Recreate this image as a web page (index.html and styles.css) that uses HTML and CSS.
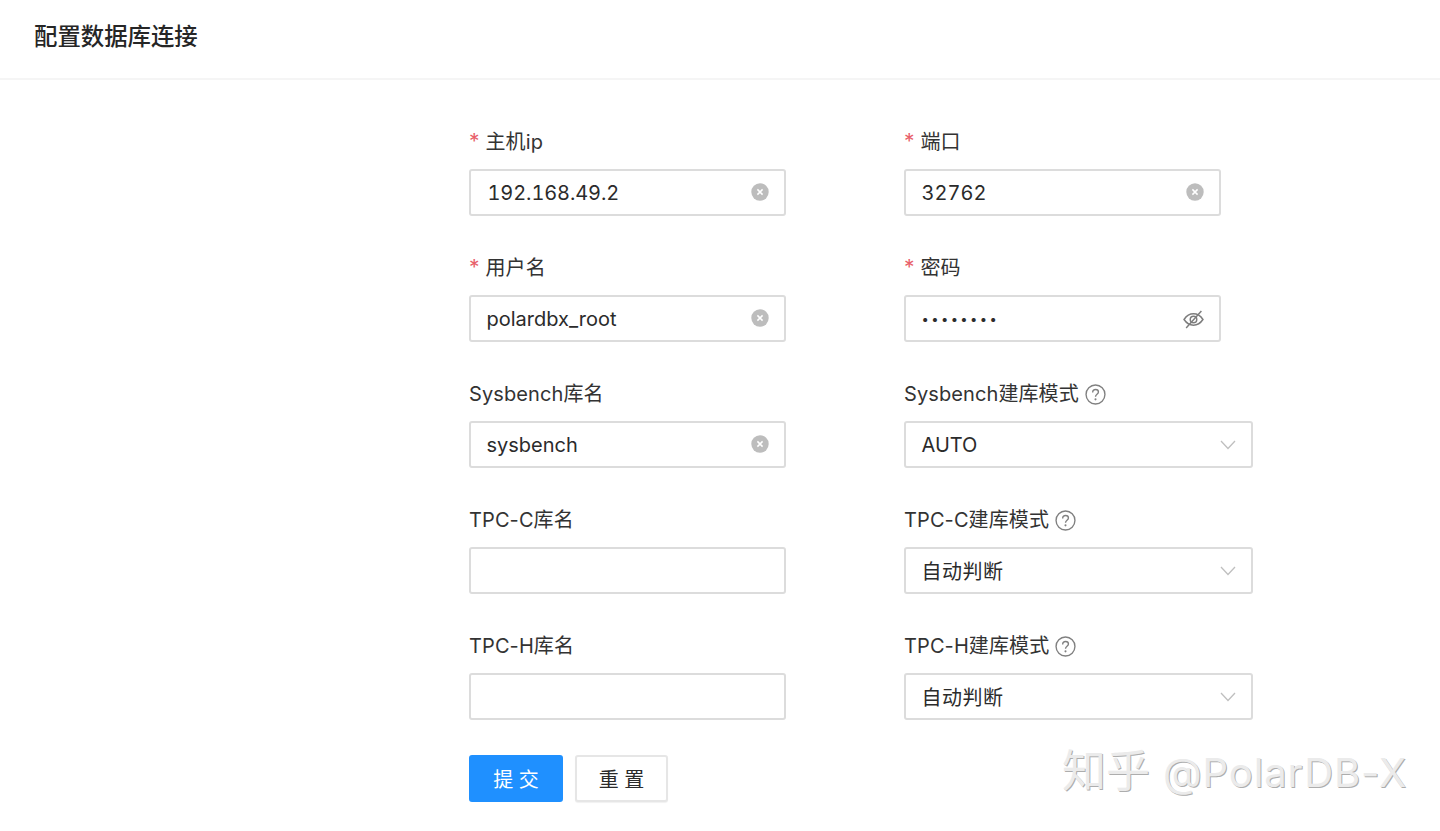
FILE: index.html
```html
<!DOCTYPE html>
<html lang="zh-CN">
<head>
<meta charset="utf-8">
<title>配置数据库连接</title>
<link rel="stylesheet" href="styles.css">
</head>
<body>
<header class="page-header"><h1>配置数据库连接</h1></header>
<main class="content">
  <form class="form-grid">
    <div class="item">
      <label class="label"><span class="req">*</span>主机ip</label>
      <div class="control narrow"><input class="input num" value="192.168.49.2">
        <svg class="clear" viewBox="0 0 18 18"><circle cx="9" cy="9" r="8.7" fill="#bdbdbd"/><path d="M6.4 6.4l5.2 5.2M11.6 6.4l-5.2 5.2" stroke="#fff" stroke-width="1.5" fill="none"/></svg>
      </div>
    </div>
    <div class="item">
      <label class="label"><span class="req">*</span>端口</label>
      <div class="control narrow"><input class="input port" value="32762">
        <svg class="clear" viewBox="0 0 18 18"><circle cx="9" cy="9" r="8.7" fill="#bdbdbd"/><path d="M6.4 6.4l5.2 5.2M11.6 6.4l-5.2 5.2" stroke="#fff" stroke-width="1.5" fill="none"/></svg>
      </div>
    </div>
    <div class="item">
      <label class="label"><span class="req">*</span>用户名</label>
      <div class="control narrow"><input class="input" value="polardbx_root">
        <svg class="clear" viewBox="0 0 18 18"><circle cx="9" cy="9" r="8.7" fill="#bdbdbd"/><path d="M6.4 6.4l5.2 5.2M11.6 6.4l-5.2 5.2" stroke="#fff" stroke-width="1.5" fill="none"/></svg>
      </div>
    </div>
    <div class="item">
      <label class="label"><span class="req">*</span>密码</label>
      <div class="control narrow"><input class="input dots" type="password" value="polardbx">
        <svg class="eye" viewBox="0 0 20 20" fill="none" stroke="#7d7d7d" stroke-width="1.4"><path d="M1 10c2.4-3.6 5.400-5.400 9-5.400s6.600 1.800 9 5.400c-2.400 3.600-5.400 5.400-9 5.400S3.400 13.600 1 10z"/><circle cx="10" cy="10" r="3.100"/><path d="M3 18L17.500 2"/></svg>
      </div>
    </div>
    <div class="item">
      <label class="label">Sysbench库名</label>
      <div class="control narrow"><input class="input" value="sysbench">
        <svg class="clear" viewBox="0 0 18 18"><circle cx="9" cy="9" r="8.7" fill="#bdbdbd"/><path d="M6.4 6.4l5.2 5.2M11.6 6.4l-5.2 5.2" stroke="#fff" stroke-width="1.5" fill="none"/></svg>
      </div>
    </div>
    <div class="item">
      <label class="label">Sysbench建库模式
        <svg class="help" viewBox="0 0 20 20"><circle cx="10" cy="10" r="9" fill="none" stroke="#808080" stroke-width="1.300"/><path d="M7.300 8c0-1.700 1.200-2.800 2.800-2.800s2.700 1 2.700 2.400c0 2.200-2.800 2.200-2.800 4.500" fill="none" stroke="#808080" stroke-width="1.300"/><circle cx="10" cy="14.600" r="1" fill="#808080"/></svg>
      </label>
      <div class="control select">AUTO
        <svg class="chev" viewBox="0 0 16 10"><path d="M1 1l7 7.500L15 1" fill="none" stroke="#bfbfbf" stroke-width="1.300"/></svg>
      </div>
    </div>
    <div class="item">
      <label class="label">TPC-C库名</label>
      <div class="control narrow"><input class="input"></div>
    </div>
    <div class="item">
      <label class="label">TPC-C建库模式
        <svg class="help" viewBox="0 0 20 20"><circle cx="10" cy="10" r="9" fill="none" stroke="#808080" stroke-width="1.300"/><path d="M7.300 8c0-1.700 1.200-2.800 2.800-2.800s2.700 1 2.700 2.400c0 2.200-2.800 2.200-2.800 4.500" fill="none" stroke="#808080" stroke-width="1.300"/><circle cx="10" cy="14.600" r="1" fill="#808080"/></svg>
      </label>
      <div class="control select zh">自动判断
        <svg class="chev" viewBox="0 0 16 10"><path d="M1 1l7 7.500L15 1" fill="none" stroke="#bfbfbf" stroke-width="1.300"/></svg>
      </div>
    </div>
    <div class="item">
      <label class="label">TPC-H库名</label>
      <div class="control narrow"><input class="input"></div>
    </div>
    <div class="item">
      <label class="label">TPC-H建库模式
        <svg class="help" viewBox="0 0 20 20"><circle cx="10" cy="10" r="9" fill="none" stroke="#808080" stroke-width="1.300"/><path d="M7.300 8c0-1.700 1.200-2.800 2.800-2.800s2.700 1 2.700 2.400c0 2.200-2.800 2.200-2.800 4.500" fill="none" stroke="#808080" stroke-width="1.300"/><circle cx="10" cy="14.600" r="1" fill="#808080"/></svg>
      </label>
      <div class="control select zh">自动判断
        <svg class="chev" viewBox="0 0 16 10"><path d="M1 1l7 7.500L15 1" fill="none" stroke="#bfbfbf" stroke-width="1.300"/></svg>
      </div>
    </div>
  </form>
  <div class="actions">
    <button type="button" class="btn primary">提 交</button>
    <button type="button" class="btn">重 置</button>
  </div>
</main>
<div class="watermark"><span class="wm-cjk">知乎</span> <span class="wm-latin">@PolarDB-X</span></div>
</body>
</html>
```
FILE: styles.css
```css
* { box-sizing: border-box; }
html, body { margin: 0; padding: 0; }
body {
  width: 1440px;
  height: 831px;
  overflow: hidden;
  background: #fff;
  color: #2b2b2b;
  font-family: Inter, "Noto Sans CJK SC", sans-serif;
  font-size: 20px;
  position: relative;
}
.page-header {
  height: 80px;
  padding-left: 34px;
  border-bottom: 2px solid #f5f5f5;
  display: flex;
  align-items: center;
}
.page-header h1 {
  margin: 0 0 8px;
  font-size: 23.400px;
  font-weight: 500;
  color: #262626;
}
.content { padding: 48px 0 0 469px; }
.form-grid {
  display: grid;
  grid-template-columns: 317px 349px;
  column-gap: 118px;
  row-gap: 38px;
}
.item { display: flex; flex-direction: column; gap: 13px; }
.label {
  height: 28px;
  line-height: 28px;
  display: flex;
  align-items: center;
  white-space: nowrap;
  color: #333;
  letter-spacing: 0.1px;
}
.req { color: #e8606a; width: 16.500px; font-size: 21px; }
.help { width: 21px; height: 21px; margin-left: 6px; }
.control {
  position: relative;
  height: 47px;
  border: 2px solid #dcdcdc;
  border-radius: 3px;
  background: #fff;
}
.narrow { width: 317px; }
.input {
  display: block;
  width: 100%;
  height: 100%;
  padding: 0 50px 0 15.500px;
  border: 0;
  outline: 0;
  background: transparent;
  font: inherit;
  color: #2b2b2b;
}
.num { font-variant-numeric: tabular-nums; letter-spacing: -0.100px; padding-left: 16.500px; }
.port { font-variant-numeric: tabular-nums; }
.dots { letter-spacing: 2.400px; font-size: 13px; }
.select {
  width: 349px;
  display: flex;
  align-items: center;
  padding-left: 15.500px;
  color: #2b2b2b;
}
.zh { letter-spacing: 0.500px; }
.clear {
  position: absolute;
  right: 15px;
  top: 12px;
  width: 18px;
  height: 18px;
}
.eye {
  position: absolute;
  right: 15px;
  top: 12px;
  width: 21px;
  height: 21px;
}
.chev {
  position: absolute;
  right: 15px;
  top: 17px;
  width: 16px;
  height: 10px;
}
.actions { display: flex; gap: 12px; margin-top: 35px; }
.btn {
  width: 93px;
  height: 47px;
  border: 2px solid #e6e6e6;
  border-radius: 3px;
  background: #fff;
  font: inherit;
  color: #2b2b2b;
  padding: 0;
  box-shadow: 0 1px 1px rgba(0, 0, 0, 0.06);
}
.primary {
  width: 94px;
  background: #1f90ff;
  border-color: #1f90ff;
  color: #fff;
  box-shadow: none;
}
.watermark {
  position: absolute;
  left: 1062px;
  top: 745px;
  line-height: 52px;
  white-space: nowrap;
  color: #ebebeb;
  text-shadow: 1px 1px 0 #adadad;
  display: flex;
  align-items: baseline;
  gap: 13px;
}
.wm-cjk { font-size: 44px; font-weight: 400; }
.wm-latin { font-size: 40px; letter-spacing: 0.900px; }
```
